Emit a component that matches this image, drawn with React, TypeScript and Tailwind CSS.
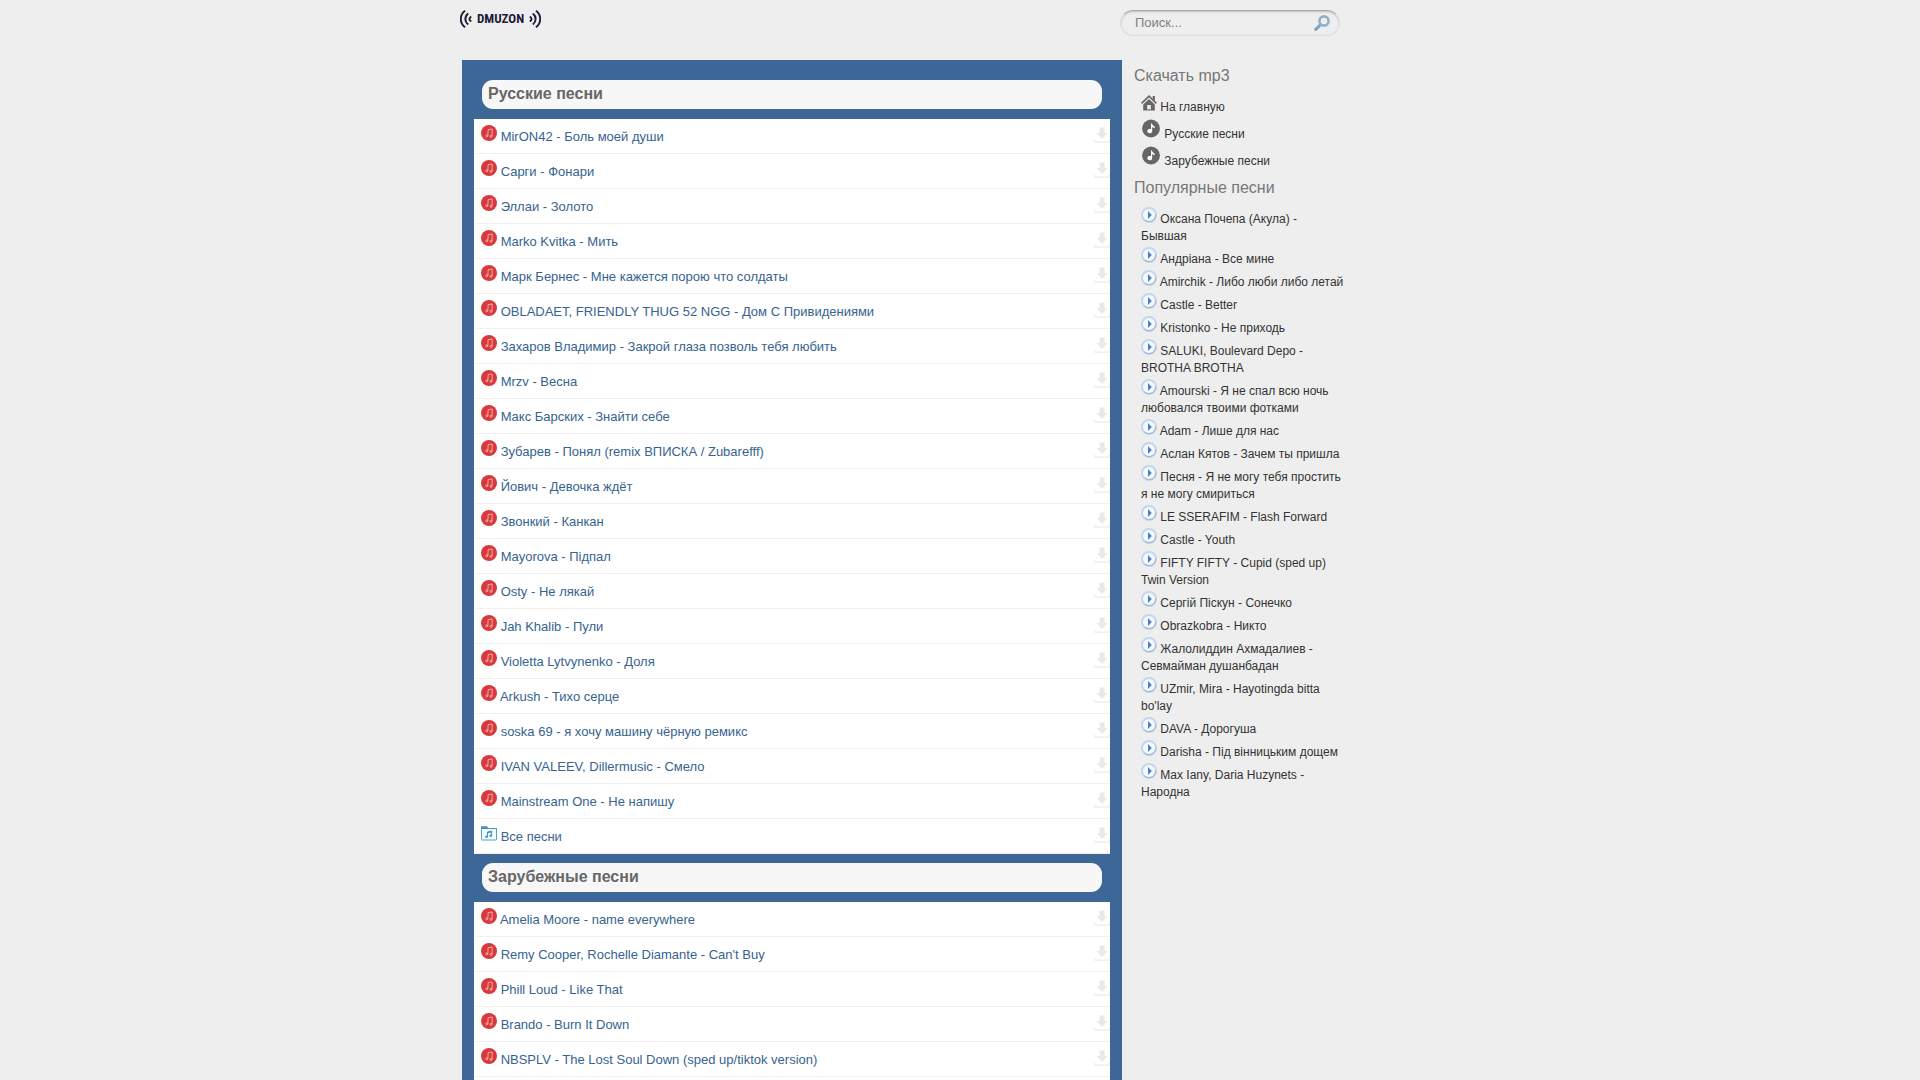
import React from "react";

const russian = [
  "MirON42 - Боль моей души",
  "Сарги - Фонари",
  "Эллаи - Золото",
  "Marko Kvitka - Мить",
  "Марк Бернес - Мне кажется порою что солдаты",
  "OBLADAET, FRIENDLY THUG 52 NGG - Дом С Привидениями",
  "Захаров Владимир - Закрой глаза позволь тебя любить",
  "Mrzv - Весна",
  "Макс Барских - Знайти себе",
  "Зубарев - Понял (remix ВПИСКА / Zubarefff)",
  "Йович - Девочка ждёт",
  "Звонкий - Канкан",
  "Mayorova - Підпал",
  "Osty - Не лякай",
  "Jah Khalib - Пули",
  "Violetta Lytvynenko - Доля",
  "Arkush - Тихо серце",
  "soska 69 - я хочу машину чёрную ремикс",
  "IVAN VALEEV, Dillermusic - Смело",
  "Mainstream One - Не напишу",
];

const foreign = [
  "Amelia Moore - name everywhere",
  "Remy Cooper, Rochelle Diamante - Can't Buy",
  "Phill Loud - Like That",
  "Brando - Burn It Down",
  "NBSPLV - The Lost Soul Down (sped up/tiktok version)",
];

const popular = [
  "Оксана Почепа (Акула) - Бывшая",
  "Андріана - Все мине",
  "Amirchik - Либо люби либо летай",
  "Castle - Better",
  "Kristonko - Не приходь",
  "SALUKI, Boulevard Depo - BROTHA BROTHA",
  "Amourski - Я не спал всю ночь любовался твоими фотками",
  "Adam - Лише для нас",
  "Аслан Кятов - Зачем ты пришла",
  "Песня - Я не могу тебя простить я не могу смириться",
  "LE SSERAFIM - Flash Forward",
  "Castle - Youth",
  "FIFTY FIFTY - Cupid (sped up) Twin Version",
  "Сергій Піскун - Сонечко",
  "Obrazkobra - Никто",
  "Жалолиддин Ахмадалиев - Севмайман душанбадан",
  "UZmir, Mira - Hayotingda bitta bo'lay",
  "DAVA - Дорогуша",
  "Darisha - Під вінницьким дощем",
  "Max Iany, Daria Huzynets - Народна",
];

function SongIcon() {
  return (
    <svg viewBox="0 0 16 16" className="inline size-4 align-baseline" aria-hidden="true">
      <circle cx="8" cy="8" r="8" fill="#d8393c" />
      <g fill="none" stroke="#f3b5b3" strokeWidth="0.9">
        <path d="M6.8 10.8L7.2 4.6L11.2 4L11 11.2" />
        <circle cx="5.8" cy="10.8" r="1" />
        <circle cx="10" cy="11.4" r="1" />
      </g>
    </svg>
  );
}

function FolderIcon() {
  return (
    <svg viewBox="0 0 16 16" className="inline size-4 align-baseline" aria-hidden="true">
      <rect x="0.5" y="3.5" width="15" height="11.5" rx="0.6" fill="#f4fbfe" stroke="#4ba3c7" />
      <path d="M0 1.2h6l1.2 1.8H16V4H0z" fill="#3d93b8" />
      <path d="M6.5 11.5V7L10.700 6V10.700M6.500 8L10.700 7" fill="none" stroke="#3d93b8" />
      <circle cx="5.500" cy="11.700" r="1.300" fill="#3d93b8" />
      <circle cx="9.700" cy="10.800" r="1.300" fill="#3d93b8" />
    </svg>
  );
}

function DownloadIcon() {
  return (
    <svg viewBox="0 0 16 16" className="size-4" aria-hidden="true">
      <path d="M5.6 0.5h5v5.500h3L8.100 12 2.600 6h3z" fill="#e9e9e9" />
      <path d="M0.6 12.500v2.600h14.800v-2.600" fill="none" stroke="#ececec" strokeWidth="1.100" />
    </svg>
  );
}

function HomeIcon() {
  return (
    <svg viewBox="0 0 16 16" className="inline size-4 align-baseline" aria-hidden="true">
      <path d="M11.700 1h2.200v5l-2.200-2.200z" fill="#666" />
      <path d="M0.600 8.400L8 1.200l7.400 7.200" fill="none" stroke="#666" strokeWidth="1.600" />
      <path d="M8 3.900l5.800 5.600V15.400H2.200V9.500z" fill="#666" />
      <rect x="6.200" y="10" width="3.600" height="4.400" fill="#eee" />
    </svg>
  );
}

function NoteIcon() {
  return (
    <svg viewBox="0 0 20 20" className="inline size-5 align-baseline" aria-hidden="true">
      <circle cx="10" cy="10.500" r="8.900" fill="#666" />
      <path d="M10 5.500h1c.2 1.800 1.200 2 2.800 3.200v1.600c-1-.7-1.800-1-2.600-1.100v3.900a2.400 2.200 0 1 1-1.200-1.900z" fill="#fff" />
    </svg>
  );
}

function PlayIcon() {
  return (
    <svg viewBox="0 0 16 16" className="inline size-4 align-baseline" aria-hidden="true">
      <circle cx="8" cy="8" r="7" fill="#f4f9ff" stroke="#c3d6ec" strokeWidth="2" />
      <path d="M3.600 13a6.600 6.600 0 0 0 11-5.500" fill="none" stroke="#a3b3c9" strokeWidth="1" />
      <path d="M7 4L10.800 8 7 12z" fill="#4a80c4" />
    </svg>
  );
}

function Waves({ className }: { className: string }) {
  return (
    <svg viewBox="0 0 12 18" className={className} fill="none" stroke="currentColor" strokeWidth="1.900" aria-hidden="true">
      <path d="M5 .8C-.600 5-.600 13 5 17.200" />
      <path d="M8.200 3.600C4.400 6.600 4.400 11.400 8.200 14.400" />
      <path d="M11.200 6.400C8.800 8.200 8.800 9.800 11.200 11.600" />
    </svg>
  );
}

function Logo() {
  return (
    <a href="#" aria-label="DMUZON" className="flex items-center gap-[5px] text-[#1f1b38]">
      <Waves className="h-[18px] w-3" />
      <span className="font-['Roboto_Condensed','Liberation_Sans_Narrow','Liberation_Sans',sans-serif] text-[13px] leading-[18px] font-bold">
        DMUZON
      </span>
      <Waves className="h-[18px] w-3 -scale-x-100" />
    </a>
  );
}

function SongRow({ title, icon }: { title: string; icon: React.ReactNode }) {
  return (
    <li className="ml-[2px] flex h-[35px] items-start justify-between border-b border-[#f0f0f0] pl-[5px]">
      <a href="#" className="pt-[6px] text-[13px] leading-5 text-[#36638f]">
        {icon} {title}
      </a>
      <a href="#" aria-label={"Скачать " + title} className="pt-2">
        <DownloadIcon />
      </a>
    </li>
  );
}

function SectionTitle({ children }: { children: React.ReactNode }) {
  return (
    <h2 className="mx-2 my-[10px] rounded-[11px] bg-[#f7f7f8] px-[6px] pt-1 pb-[5px] text-base leading-5 font-bold text-[#666]">
      {children}
    </h2>
  );
}

function SideTitle({ children }: { children: React.ReactNode }) {
  return <h3 className="pt-[5px] text-base leading-[22px] text-[#777]">{children}</h3>;
}

export default function App() {
  return (
    <div className="h-screen overflow-hidden bg-[#eee] font-['Liberation_Sans',Arial,sans-serif]">
      <div className="mx-auto flex h-full max-w-[1000px] flex-col">
        <header className="flex h-[60px] shrink-0 items-start pt-[10px]">
          <Logo />
          <form className="mr-[120px] ml-auto flex h-[26px] w-[220px] items-center rounded-full border border-[#ddd] border-t-[#aaa] pr-[9px] pl-[14px] shadow-[inset_0_1px_2px_rgba(0,0,0,0.2)]">
            <input
              type="search"
              aria-label="Поиск"
              placeholder="Поиск..."
              className="min-w-0 flex-1 bg-transparent text-[13px] leading-5 outline-none placeholder:text-[#808080]"
            />
            <button type="submit" aria-label="Найти">
              <svg viewBox="0 0 16 16" className="size-4" fill="none" aria-hidden="true">
                <path d="M1.800 14.400L5.600 10.600" stroke="#7ea3c0" strokeWidth="3" strokeLinecap="round" />
                <circle cx="10" cy="6" r="4.600" stroke="#8fb0c9" strokeWidth="2.600" />
              </svg>
            </button>
          </form>
        </header>
        <div className="flex min-h-0 flex-1">
          <main className="ml-[2px] flex w-[660px] flex-col bg-[#3c6797] px-3 pt-[10px]">
            <section>
              <SectionTitle>Русские песни</SectionTitle>
              <ul className="-mb-px bg-white">
                {russian.map((s) => (
                  <SongRow key={s} title={s} icon={<SongIcon />} />
                ))}
                <SongRow title="Все песни" icon={<FolderIcon />} />
              </ul>
            </section>
            <section className="flex flex-1 flex-col">
              <SectionTitle>Зарубежные песни</SectionTitle>
              <ul className="flex-1 bg-white">
                {foreign.map((s) => (
                  <SongRow key={s} title={s} icon={<SongIcon />} />
                ))}
              </ul>
            </section>
          </main>
          <aside className="ml-3 w-[211px] text-xs leading-[17px] text-[#333]">
            <SideTitle>Скачать mp3</SideTitle>
            <ul className="pt-2 pl-[7px]">
              <li className="pb-[2px]"><a href="#"><HomeIcon /> На главную</a></li>
              <li className="pb-[2px]"><a href="#"><NoteIcon /> Русские песни</a></li>
              <li className="pb-[2px]"><a href="#"><NoteIcon /> Зарубежные песни</a></li>
            </ul>
            <SideTitle>Популярные песни</SideTitle>
            <ul className="pt-2 pl-[7px]">
              {popular.map((s) => (
                <li key={s} className="pb-[2px]"><a href="#"><PlayIcon /> {s}</a></li>
              ))}
            </ul>
          </aside>
        </div>
      </div>
    </div>
  );
}
